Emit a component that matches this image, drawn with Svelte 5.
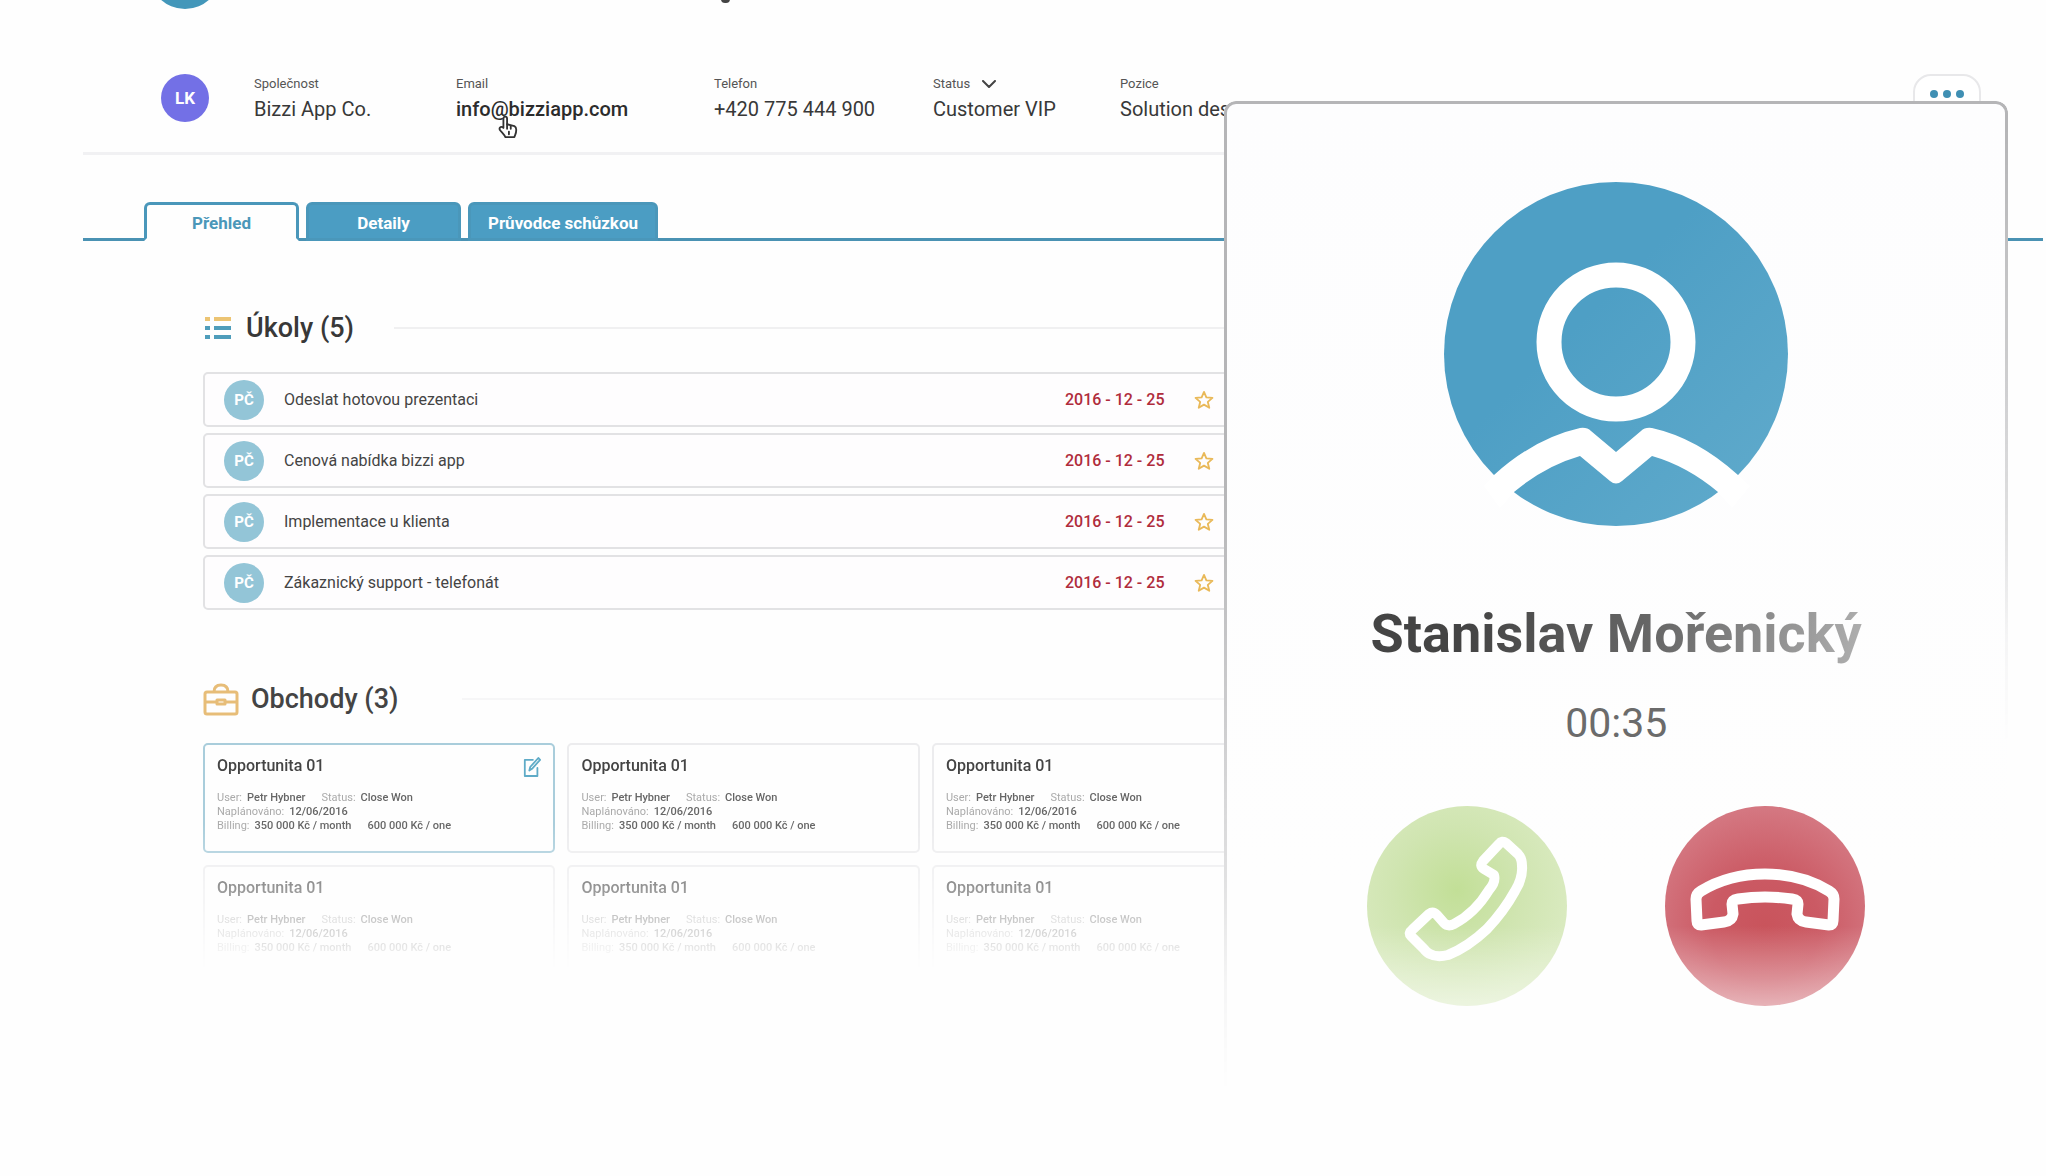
<script>
  const tabs = ['Přehled', 'Detaily', 'Průvodce schůzkou'];
  let active = $state(0);

  const tasks = [
    'Odeslat hotovou prezentaci',
    'Cenová nabídka bizzi app',
    'Implementace u klienta',
    'Zákaznický support - telefonát',
  ];
  const deals = Array.from({ length: 6 }, (_, id) => ({ id, title: 'Opportunita 01', selected: id === 0 }));
</script>

<div class="page">
  <div class="brand" aria-hidden="true">
    <span class="logo"></span>
    <span class="stem"></span>
  </div>

  <header class="contact">
    <span class="avatar">LK</span>
    <div class="fields">
      <div class="field">
        <span class="label">Společnost</span>
        <span class="value">Bizzi App Co.</span>
      </div>
      <div class="field">
        <span class="label">Email</span>
        <a class="value strong" href="mailto:info@bizziapp.com">info@bizziapp.com</a>
        <svg class="pointer" viewBox="0 0 24 26" aria-hidden="true">
          <path d="M7 14V4c0-3 4-3 4 0v6l8 2c2 1 2 2 2 4 0 4-1 5-2 8H9c-1-3-4-5-6-8-1-3 2-4 4-2z" />
          <path d="M11 10v5M15 12v3M13 18v3" />
        </svg>
      </div>
      <div class="field">
        <span class="label">Telefon</span>
        <span class="value">+420 775 444 900</span>
      </div>
      <div class="field">
        <button class="label status" type="button">
          Status
          <svg viewBox="0 0 14 8" aria-hidden="true"><path d="M1 1l6 6 6-6" /></svg>
        </button>
        <span class="value">Customer VIP</span>
      </div>
      <div class="field">
        <span class="label">Pozice</span>
        <span class="value">Solution des</span>
      </div>
    </div>
    <button class="more" type="button" aria-label="Více"><i></i><i></i><i></i></button>
  </header>

  <div class="tabs" role="tablist">
    {#each tabs as tab, i}
      <button type="button" role="tab" class="tab" class:active={active === i} aria-selected={active === i} onclick={() => (active = i)}>{tab}</button>
    {/each}
  </div>

  <main>
    <section>
      <h2>
        <svg class="list-icon" viewBox="0 0 26 26" aria-hidden="true">
          <path class="amber" d="M0 4h5M9 4h17" />
          <path class="blue" d="M0 13h5M9 13h17M0 22h5M9 22h17" />
        </svg>
        <span>Úkoly (5)</span>
      </h2>
      <ul>
        {#each tasks as task}
          <li>
            <span class="initials">PČ</span>
            <span class="task">{task}</span>
            <time datetime="2016-12-25">2016 - 12 - 25</time>
            <button class="star" type="button" aria-label="Označit hvězdičkou">
              <svg viewBox="0 0 22 22"><path d="M11 2l2.600 6.200 6.700.500-5.100 4.400 1.600 6.500L11 16.100l-5.800 3.500 1.600-6.500L1.700 8.700l6.700-.500z" /></svg>
            </button>
          </li>
        {/each}
      </ul>
    </section>

    <section class="deals">
      <h2>
        <svg class="case-icon" viewBox="0 0 36 34" aria-hidden="true">
          <path d="M4 10h28q2 0 2 2v18q0 2-2 2H4q-2 0-2-2V12q0-2 2-2zM11 10q0-7 7-7t7 7M2 20h12M22 20h12M14 18h8v4h-8z" />
        </svg>
        <span>Obchody (3)</span>
      </h2>
      <div class="grid">
        {#each deals as deal (deal.id)}
          <article class:selected={deal.selected}>
            <h3>{deal.title}</h3>
            <dl>
              <div><dt>User:</dt><dd>Petr Hybner</dd><dt>Status:</dt><dd>Close Won</dd></div>
              <div><dt>Naplánováno:</dt><dd>12/06/2016</dd></div>
              <div><dt>Billing:</dt><dd>350 000 Kč / month</dd><dd>600 000 Kč / one</dd></div>
            </dl>
            {#if deal.selected}
              <button class="edit" type="button" aria-label="Upravit">
                <svg viewBox="0 0 20 24"><path d="M11 4H2v18h14v-9M7 16l1-4 9-10 2 2-9 10z" /></svg>
              </button>
            {/if}
          </article>
        {/each}
      </div>
    </section>
  </main>

  <aside class="call" aria-label="Příchozí hovor">
    <svg class="portrait" viewBox="0 0 344 344" aria-hidden="true">
      <defs>
        <linearGradient id="tint" x1="0" y1="0" x2="1" y2="1">
          <stop offset="0.4" stop-color="#4e9fc5" />
          <stop offset="1" stop-color="#61abcc" />
        </linearGradient>
      </defs>
      <circle cx="172" cy="172" r="172" fill="url(#tint)" />
      <circle class="head" cx="172" cy="160" r="67" />
      <path class="collar" d="M40 304L50 293Q91 256 136 246Q143 245 147 249L172 270L197 249Q201 245 208 246Q253 256 294 293L306 304L288 326L274 310Q243 284 208 274L178 299Q172 304 166 299L136 274Q101 284 70 310L56 326Z" />
    </svg>
    <h1>Stanislav Mořenický</h1>
    <p>00:35</p>
    <div class="actions">
      <button class="accept" type="button" aria-label="Přijmout">
        <svg viewBox="0 0 200 200"><path d="M132 38Q135 34 139 37L151 48Q155 52 155 60Q156 72 148 85Q137 105 120 123Q101 141 81 149Q70 152 63 148Q60 147 57 143L44 130Q41 127 45 124L62 108Q66 105 70 109L77 117Q81 121 87 118Q108 107 122 84Q129 76 127 69L117 63Q112 60 116 55Z" /></svg>
      </button>
      <button class="decline" type="button" aria-label="Zavěsit">
        <svg viewBox="0 0 200 200"><path d="M36 119Q32 119 32 115L31 93Q31 88 36 85Q64 68 100 68Q136 68 164 85Q169 88 169 93L168 115Q168 119 164 119L141 116Q133 115 132 108L133 98Q133 94 127 93Q100 89 73 93Q67 94 67 98L68 108Q67 115 59 116Z" /></svg>
      </button>
    </div>
  </aside>
</div>

<style>
  :global(body) { background: #fefefe; }
  .page {
    position: relative;
    min-height: 100vh;
    overflow: hidden;
    box-sizing: border-box;
    padding: 0 3px 0 83px;
    font-family: Roboto, "Liberation Sans", sans-serif;
    color: #383838;
  }
  .page :global(*) { box-sizing: border-box; }
  button { font: inherit; color: inherit; background: none; border: 0; padding: 0; cursor: pointer; }
  svg { display: block; fill: none; stroke-linejoin: round; stroke-linecap: round; }
  h1, h2, h3, p, ul, dl, dd { margin: 0; padding: 0; }

  .brand { display: flex; align-items: flex-end; gap: 500px; height: 72px; margin-top: -63px; padding-left: 66px; }
  .logo { width: 72px; height: 72px; border-radius: 50%; background: #4397ba; }
  .stem { width: 9px; height: 12px; margin-bottom: 6px; border-radius: 0 0 4px 4px; background: #444; }

  .contact {
    display: flex; align-items: center; height: 146px; padding: 32px 62px 0 78px;
    background: linear-gradient(#f1f1f3, #f1f1f3) left bottom / 60% 3px no-repeat;
  }
  .avatar {
    flex: none; display: grid; place-items: center; width: 48px; height: 48px; margin-right: 45px;
    border-radius: 50%; background: #7370e6; color: #fff; font-size: 17px; font-weight: 700;
  }
  .fields { flex: 1; display: grid; grid-template-columns: 202px 258px 219px 187px 1fr; padding-top: 2px; }
  .field { position: relative; display: flex; flex-direction: column; align-items: flex-start; white-space: nowrap; }
  .label { font-size: 13px; line-height: 20px; color: #555; }
  .status { display: flex; align-items: center; gap: 12px; }
  .status svg { width: 14px; height: 8px; stroke: #444; stroke-width: 2; }
  .value { font-size: 20px; line-height: 30px; color: #383838; text-decoration: none; }
  .strong { font-weight: 500; color: #2c2c2c; }
  .pointer { position: absolute; left: 41px; top: 41px; width: 22px; height: 24px; fill: #fff; stroke: #333; stroke-width: 2; }
  .more {
    flex: none; display: flex; align-items: center; justify-content: center; gap: 5px; width: 68px; height: 48px;
    margin-left: auto; padding-bottom: 8px; border: 2px solid #e8e8ea; border-radius: 18px; background: #fff;
  }
  .more i { width: 8px; height: 8px; border-radius: 50%; background: #3f8fb3; }

  .tabs { display: flex; gap: 7px; margin-top: 47px; padding-left: 61px; border-bottom: 3px solid #4a92b3; }
  .tab {
    height: 39px; margin-bottom: -3px; padding: 3px 16px 0; min-width: 155px; border: 3px solid #4a97ba; border-radius: 6px 6px 0 0;
    background: #4b9dc3; color: #fff; font-size: 17px; font-weight: 700;
  }
  .tab:last-child { min-width: 190px; }
  .tab.active { background: #fefefe; border-bottom-color: #fefefe; color: #4b97b9; }

  main { width: 61.300%; padding: 63px 0 0 120px; }
  h2 { display: flex; align-items: center; height: 48px; font-size: 27px; font-weight: 500; white-space: nowrap; }
  h2::after { content: ""; flex: 1; height: 2px; margin-left: 40px; background: #f0f0f1; }
  .deals h2::after { margin-left: 64px; background: #f6f6f7; }
  .list-icon { width: 26px; height: 26px; margin: 0 15px 0 2px; stroke-width: 4; stroke-linecap: butt; }
  .amber { stroke: #ecc473; }
  .blue { stroke: #4f9dbb; }
  .case-icon { width: 36px; height: 34px; margin-right: 12px; stroke: #e7bd78; stroke-width: 3; }

  ul { display: grid; gap: 6px; margin-top: 20px; list-style: none; }
  li { display: flex; align-items: center; height: 55px; padding: 0 68px 0 19px; border: 2px solid #e2e2e4; border-radius: 5px; background: #fefdfe; }
  .initials { display: grid; place-items: center; width: 40px; height: 40px; margin-right: 20px; border-radius: 50%; background: #93c5d7; color: #fff; font-size: 15px; font-weight: 700; }
  .task { flex: 1; font-size: 16px; color: #444; }
  time { font-size: 16px; font-weight: 500; color: #b02c3c; }
  .star { margin-left: 30px; }
  .star svg { width: 20px; height: 20px; stroke: #e9b959; stroke-width: 2; }

  .deals { margin-top: 65px; color: #444; }
  .grid {
    display: grid; grid-template-columns: repeat(3, 1fr); gap: 12px; margin-top: 20px;
    mask-image: linear-gradient(#000 35%, rgb(0 0 0 / 0.6) 60%, transparent 98%);
  }
  article { position: relative; height: 110px; padding: 11px 12px; border: 2px solid #ececee; border-radius: 5px; }
  .selected { border-color: #a9cddb; }
  h3 { font-size: 16px; line-height: 20px; font-weight: 500; }
  dl { margin-top: 15px; font-size: 11px; line-height: 14px; white-space: nowrap; }
  dl div { display: flex; }
  dt { margin-right: 5px; color: #aaa; }
  dd { margin-right: 16px; color: #666; font-weight: 500; }
  .edit { position: absolute; right: 12px; top: 11px; }
  .edit svg { width: 18px; height: 22px; stroke: #5fabc7; stroke-width: 2; }

  .call {
    position: absolute; top: 101px; right: 38px; width: 38.300%; height: 990px;
    display: flex; flex-direction: column; align-items: center; padding-top: 81px;
    border-radius: 12px 12px 0 0; background: linear-gradient(#fdfdfe, #fefefe 80%);
  }
  .call::before {
    content: ""; position: absolute; inset: 0; border: 3px solid #b5b5b7; border-bottom: 0; border-radius: 12px 12px 0 0;
    pointer-events: none;
    mask-image: linear-gradient(156deg, #000 28%, rgb(0 0 0 / 0.7) 45%, rgb(0 0 0 / 0.400) 58%, rgb(0 0 0 / 0.12) 66%, transparent 74%);
  }
  .portrait { width: 344px; height: 344px; }
  .head { stroke: #fff; stroke-width: 25; }
  .collar { fill: #fff; }
  h1 {
    margin-top: 75px; font-size: 54px; line-height: 66px; font-weight: 700; white-space: nowrap;
    background: linear-gradient(100deg, #444 20%, #6a6a6a 60%, #b0b0b0); background-clip: text; color: transparent;
  }
  p { margin-top: 30px; font-size: 41px; line-height: 52px; color: #6b6b6b; }
  .actions { display: flex; gap: 98px; margin-top: 57px; }
  .actions button { width: 200px; height: 200px; border-radius: 50%; }
  .actions svg { width: 100%; height: 100%; stroke: #fff; stroke-width: 10; }
  .accept { background: linear-gradient(transparent 60%, rgb(255 255 255 / 0.5)), radial-gradient(circle at 45% 42%, #c2df97, #d0e5b1 40%, #d9eabf 70%); }
  .decline { background: linear-gradient(transparent 60%, rgb(255 255 255 / 0.5)), radial-gradient(circle at 50% 60%, #c9545c, #cb5a64 35%, #d47781 75%); }
  .actions .decline svg { stroke-width: 11; }
</style>
